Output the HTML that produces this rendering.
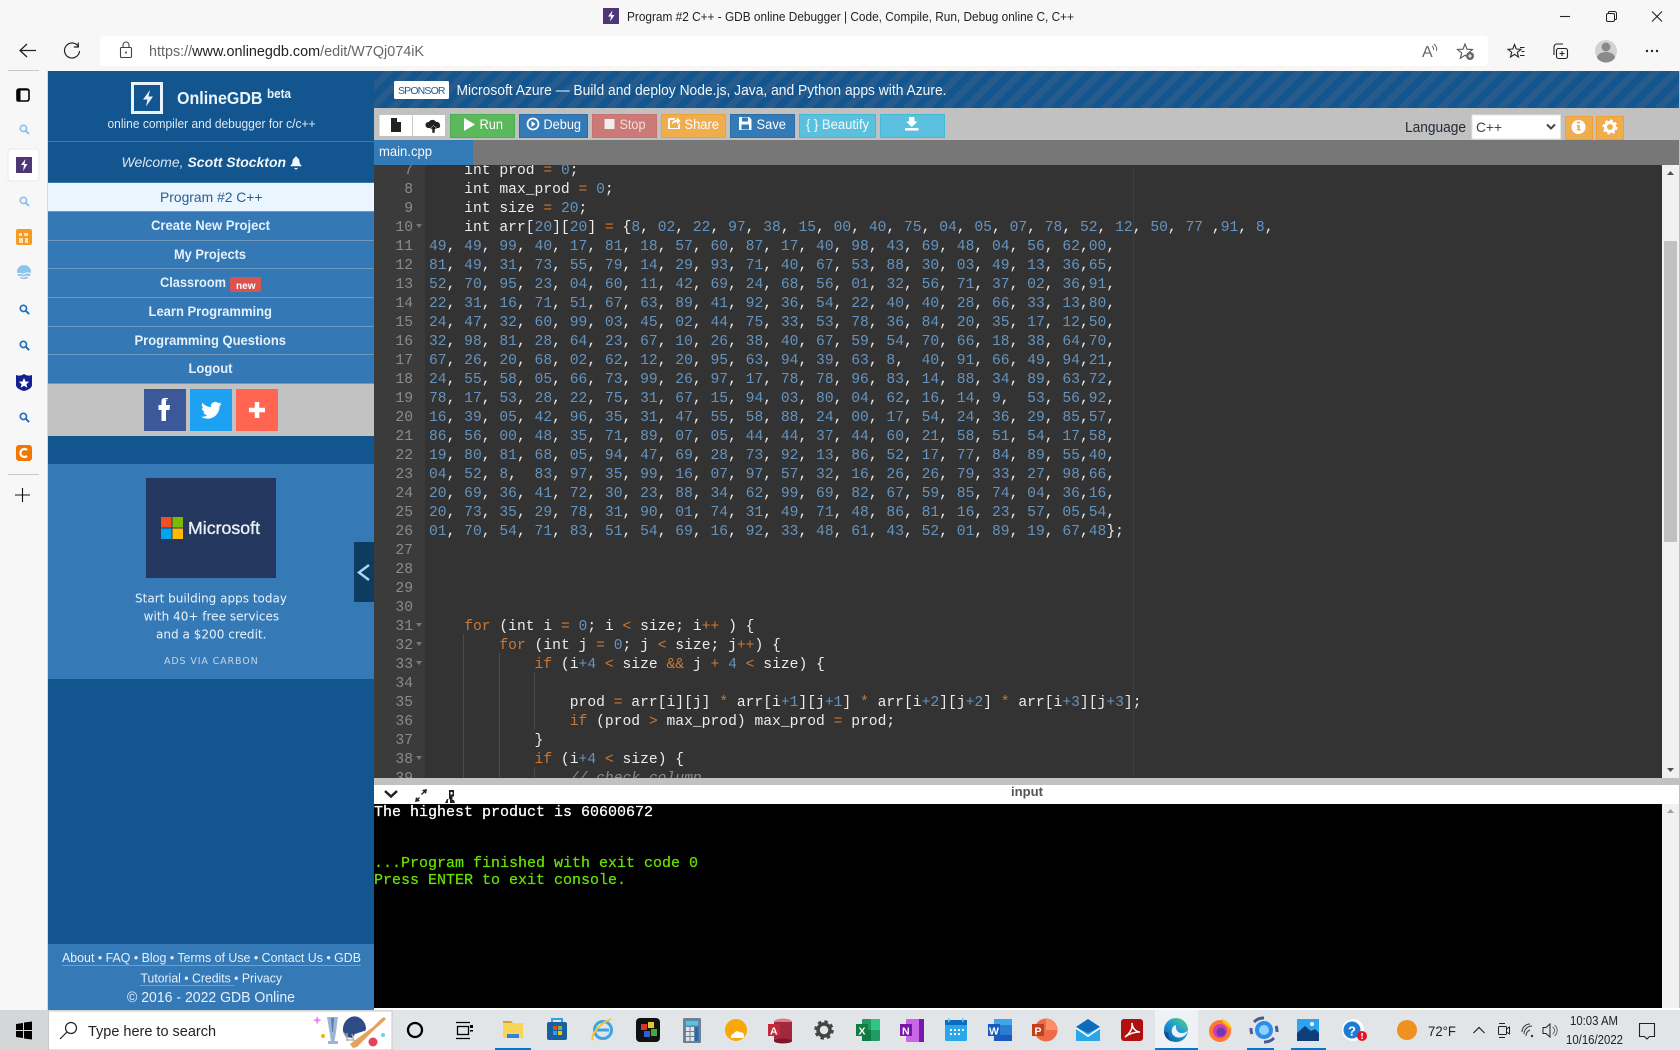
<!DOCTYPE html>
<html><head><meta charset="utf-8"><title>Program #2 C++ - GDB online Debugger</title>
<style>
html,body{margin:0;padding:0;width:1680px;height:1050px;overflow:hidden;background:#f7f7f7}
svg{position:absolute;left:0;top:0}
text{font-family:"Liberation Sans",sans-serif}
.box{position:absolute;overflow:hidden}
pre{position:absolute;margin:0;font-family:"Liberation Mono",monospace}
#code,#nums{font-size:14.667px;line-height:19px;top:-3.5px}
#code{left:4px;color:#ececec}
#nums{left:0;width:39px;text-align:right;color:#8b8b8b}
#code b{font-weight:normal;color:#6494c0}
#code s{text-decoration:none;color:#ececec}
#code i{font-style:normal;color:#cc7832}
#code em{font-style:italic;color:#8a8a8a}
#con{left:0;top:-.5px;font-size:15px;line-height:17px;color:#fff;font-weight:normal;-webkit-text-stroke:.25px currentColor}
#con span{color:#66e000}
.g{position:absolute;width:1px;background:#4a4a4a}
.f{position:absolute;left:42px;width:0;height:0;border-left:3px solid transparent;border-right:3px solid transparent;border-top:4px solid #777}
</style></head><body>
<svg width="1680" height="1050" viewBox="0 0 1680 1050" xmlns="http://www.w3.org/2000/svg">
<defs>
<pattern id="st" width="14" height="14" patternUnits="userSpaceOnUse" patternTransform="rotate(45)"><rect width="14" height="14" fill="#12558f"/><rect width="7" height="14" fill="#265b8b"/></pattern>
<symbol id="sr" viewBox="0 0 12 12"><circle cx="4.8" cy="4.8" r="3.4" fill="none" stroke="currentColor" stroke-width="1.8"/><path d="M7.3 7.3L11 11" stroke="currentColor" stroke-width="2.2"/></symbol>
<linearGradient id="eg" x1="0.1" y1="1" x2="0.9" y2="0"><stop offset="0" stop-color="#0a5ea8"/><stop offset=".55" stop-color="#1f9ad6"/><stop offset="1" stop-color="#58d37a"/></linearGradient>
</defs>
<rect width="1680" height="1050" fill="#f7f7f7"/>

<!-- title bar -->
<rect x="603" y="8" width="16" height="16" fill="#4f3677"/>
<path d="M612.5 10.5l-4.5 6h3l-1 5 4.500-6.500h-3z" fill="#fff"/>
<text x="627" y="21" font-size="12.500" fill="#222" textLength="447" lengthAdjust="spacingAndGlyphs">Program #2 C++ - GDB online Debugger | Code, Compile, Run, Debug online C, C++</text>
<path d="M1560 16.500h10" stroke="#222" stroke-width="1.100"/>
<g fill="none" stroke="#222" stroke-width="1"><rect x="1606.500" y="13.500" width="8" height="8" rx="1.500"/><path d="M1608.500 13.500v-1a1 1 0 011-1h5a2 2 0 012 2v5a1 1 0 01-1 1h-1"/></g>
<path d="M1652 11.500l10 10M1662 11.500l-10 10" stroke="#222" stroke-width="1.100"/>

<!-- toolbar -->
<path d="M20 50.500h16M27 44l-7 6.500 7 6.500" fill="none" stroke="#222" stroke-width="1.300"/>
<path d="M78 46a7.500 7.500 0 10 1.500 5M78.300 42.500v4.500h-4.500" fill="none" stroke="#222" stroke-width="1.200"/>
<rect x="100" y="36" width="1388" height="30" rx="4" fill="#fff"/>
<g fill="none" stroke="#444" stroke-width="1.100"><rect x="120.500" y="47.500" width="11" height="10" rx="1"/><path d="M123 47.500v-2.500a3 3 0 016 0v2.500"/></g><circle cx="126" cy="52.500" r="1" fill="#444"/>
<text x="149" y="56" font-size="14.500" fill="#666" textLength="275" lengthAdjust="spacingAndGlyphs">https://<tspan fill="#222">www.onlinegdb.com</tspan>/edit/W7Qj074iK</text>
<text x="1422" y="57" font-size="16" fill="#666">A</text>
<path d="M1434 44a7 7 0 012.500 7M1432 46a4 4 0 011.500 4" fill="none" stroke="#666"/>
<path d="M1465 44l2 5.200 5.500.3-4.200 3.500 1.400 5.300-4.700-3-4.700 3 1.400-5.300-4.200-3.500 5.500-.3z" fill="none" stroke="#555" stroke-width="1.100"/>
<circle cx="1470" cy="56" r="4" fill="#666"/><path d="M1468 56h4M1470 54v4" stroke="#fff"/>
<path d="M1514.500 44.500l1.700 4.500 4.800.3-3.700 3 1.200 4.700-4-2.600-4 2.600 1.200-4.700-3.700-3 4.800-.3z" fill="none" stroke="#222" stroke-width="1.100"/><path d="M1520 47.500h4.500M1521.500 51.500h3M1520 55.500h4.500" stroke="#222"/>
<g fill="none" stroke="#222" stroke-width="1.100"><rect x="1556.500" y="48.500" width="11" height="10" rx="2"/><path d="M1554 55v-8a3 3 0 013-3h6M1562 51v5M1559.500 53.500h5"/></g>
<circle cx="1606" cy="51" r="11" fill="#d2d2d2"/><circle cx="1606" cy="47" r="4.500" fill="#8a8a8a"/><path d="M1597 58a9 6 0 0118 0 11 11 0 01-18 0z" fill="#8a8a8a"/>
<g fill="#222"><circle cx="1647" cy="51" r="1.200"/><circle cx="1652" cy="51" r="1.200"/><circle cx="1657" cy="51" r="1.200"/></g>

<!-- left strip -->
<path d="M8 70.500h31" stroke="#c8c8c8"/>
<path d="M47.500 71v939" stroke="#d8d8d8"/>
<rect x="17" y="89" width="12" height="12" rx="2" fill="none" stroke="#000" stroke-width="1.600"/><path d="M17 90h12M17 91h3v10h-3z" stroke="#000" fill="#000" stroke-width="1"/>
<use href="#sr" x="19" y="124" width="11" height="11" color="#8ec0ea"/>
<rect x="8" y="149" width="31" height="32" rx="3" fill="#fff" stroke="#e8e8e8"/>
<rect x="16" y="157" width="16" height="16" fill="#4f3677"/><path d="M25.500 159l-4.500 6h3l-1 6 4.500-7h-3z" fill="#fff"/>
<use href="#sr" x="19" y="196" width="11" height="11" color="#8ec0ea"/>
<rect x="16" y="229" width="16" height="16" rx="2" fill="#f59a23"/><path d="M19 233h3v3h-3zM24 233h4v3h-4zM19 238h4v5h-4zM25 238h3v5h-3z" fill="#fde3ba"/>
<circle cx="24" cy="272" r="7" fill="#8cc4ec"/><path d="M17 274c3-2 5 1 7 0s5-2 7 0M18 277c3-2 5 1 6 0s4-1 6 0" stroke="#fff" fill="none"/>
<use href="#sr" x="19" y="304" width="11" height="11" color="#1f6fc0"/>
<use href="#sr" x="19" y="340" width="11" height="11" color="#1f6fc0"/>
<path d="M16 375c3 1 5 1 8-1 3 2 5 2 8 1v10c0 3-4 5-8 6-4-1-8-3-8-6z" fill="#14208f"/><path d="M24 378l1.600 3.500 3.600.3-2.800 2.400.9 3.500-3.300-2-3.300 2 .9-3.500-2.800-2.400 3.600-.3z" fill="#fff"/>
<use href="#sr" x="19" y="412" width="11" height="11" color="#1f6fc0"/>
<rect x="16" y="445" width="16" height="16" rx="3" fill="#f07800"/><path d="M27 450a4 4 0 100 6" stroke="#fff" stroke-width="2.200" fill="none"/>
<path d="M8 474.500h31" stroke="#c8c8c8"/>
<path d="M15 495h15M22.500 488v14" stroke="#111" stroke-width="1.100"/>

<!-- gdb sidebar -->
<rect x="48" y="71" width="326" height="939" fill="#12558f"/>
<rect x="48" y="141" width="326" height="1" fill="#3d78ac"/>
<rect x="132.500" y="83.500" width="29" height="29" fill="none" stroke="#eaf3fb" stroke-width="3"/>
<path d="M150 90l-7 9.500h4.500l-1.500 7 7-10h-4.500z" fill="#eaf3fb"/>
<text x="177" y="104" font-size="17.500" font-weight="bold" fill="#eaf4fd" textLength="85.500" lengthAdjust="spacingAndGlyphs">OnlineGDB</text>
<text x="267" y="98" font-size="12.500" font-weight="bold" fill="#eaf4fd" textLength="24" lengthAdjust="spacingAndGlyphs">beta</text>
<text x="107.500" y="128" font-size="12.500" fill="#dfe9f3" textLength="208" lengthAdjust="spacingAndGlyphs">online compiler and debugger for c/c++</text>
<text x="121.500" y="167" font-size="14" font-style="italic" fill="#d9e6f2" textLength="62" lengthAdjust="spacingAndGlyphs">Welcome,</text>
<text x="187.500" y="167" font-size="14" font-style="italic" font-weight="bold" fill="#f0f7fd" textLength="98.500" lengthAdjust="spacingAndGlyphs">Scott Stockton</text>
<path d="M296 156.500a1 1 0 011 1.200 3.500 4 0 012.500 3.800c0 2.500 1.500 3.500 2 4v.8h-11v-.8c.5-.5 2-1.500 2-4a3.500 4 0 012.500-3.800 1 1 0 011-1.200zM294.500 168h3a1.500 1.500 0 01-3 0z" fill="#f0f7fd"/>
<rect x="48" y="182" width="326" height="1" fill="#3d78ac"/>
<rect x="48" y="183" width="326" height="28" fill="#ebf5ff"/>
<text x="160" y="202" font-size="14" fill="#2a5f90" textLength="102.500" lengthAdjust="spacingAndGlyphs">Program #2 C++</text>
<rect x="48" y="211" width="326" height="173" fill="#3479b5"/>
<g fill="#6e97bb"><rect x="48" y="211" width="326" height="1"/><rect x="48" y="240" width="326" height="1"/><rect x="48" y="268" width="326" height="1"/><rect x="48" y="297" width="326" height="1"/><rect x="48" y="326" width="326" height="1"/><rect x="48" y="354" width="326" height="1"/><rect x="48" y="383" width="326" height="1"/></g>
<g font-size="13.500" font-weight="bold" fill="#e4f1fc">
<text x="151" y="230" textLength="119" lengthAdjust="spacingAndGlyphs">Create New Project</text>
<text x="174" y="259" textLength="72" lengthAdjust="spacingAndGlyphs">My Projects</text>
<text x="160" y="287" textLength="66" lengthAdjust="spacingAndGlyphs">Classroom</text>
<text x="148.500" y="316" textLength="123.500" lengthAdjust="spacingAndGlyphs">Learn Programming</text>
<text x="134.500" y="345" textLength="151.500" lengthAdjust="spacingAndGlyphs">Programming Questions</text>
<text x="188.500" y="373" textLength="44" lengthAdjust="spacingAndGlyphs">Logout</text>
</g>
<rect x="230" y="277" width="31" height="15" rx="2" fill="#d9534f"/>
<text x="236" y="289" font-size="10.500" font-weight="bold" fill="#fff" textLength="19.500" lengthAdjust="spacingAndGlyphs">new</text>
<rect x="48" y="384" width="326" height="52" fill="#c2c2c2"/>
<rect x="144" y="389" width="42" height="42" fill="#3b5998"/>
<path d="M168 400h3.500v-1h-3c-3 0-3.500 1.500-3.500 4v3h-3v5h3v11h4.500v-11h3.500l.5-5h-4v-3c0-1.500.5-2 1.500-2z" fill="#fff" transform="translate(-3.500 -1)"/>
<rect x="190" y="389" width="42" height="42" fill="#1da1f2"/>
<g transform="translate(201 400) scale(.86)"><path fill="#fff" d="M23.953 4.57a10 10 0 01-2.825.775 4.958 4.958 0 002.163-2.723c-.951.555-2.005.959-3.127 1.184a4.92 4.92 0 00-8.384 4.482C7.69 8.095 4.067 6.13 1.64 3.162a4.822 4.822 0 00-.666 2.475c0 1.71.87 3.213 2.188 4.096a4.904 4.904 0 01-2.228-.616v.06a4.923 4.923 0 003.946 4.827 4.996 4.996 0 01-2.212.085 4.936 4.936 0 004.604 3.417 9.867 9.867 0 01-6.102 2.105c-.39 0-.779-.023-1.17-.067a13.995 13.995 0 007.557 2.209c9.053 0 13.998-7.496 13.998-13.985 0-.21 0-.42-.015-.63A9.935 9.935 0 0024 4.59z"/></g>
<rect x="236" y="389" width="42" height="42" fill="#ff6550"/>
<path d="M257 402v16M249 410h16" stroke="#fff" stroke-width="4.500"/>
<rect x="48" y="464" width="326" height="215" fill="#3579b6"/>
<rect x="146" y="478" width="130" height="100" fill="#24375f"/>
<rect x="161" y="517" width="10.500" height="10.500" fill="#f25022"/><rect x="172.500" y="517" width="10.500" height="10.500" fill="#7fba00"/><rect x="161" y="528.500" width="10.500" height="10.500" fill="#00a4ef"/><rect x="172.500" y="528.500" width="10.500" height="10.500" fill="#ffb900"/>
<text x="188" y="534" font-size="17.500" fill="#eef0f4" stroke="#eef0f4" stroke-width=".35" textLength="72" lengthAdjust="spacingAndGlyphs">Microsoft</text>
<g fill="#e8f3fc" font-size="12">
<text style="font-family:'DejaVu Sans',sans-serif" x="135" y="602.500" textLength="152" lengthAdjust="spacingAndGlyphs">Start building apps today</text>
<text style="font-family:'DejaVu Sans',sans-serif" x="143.700" y="620.500" textLength="135.500" lengthAdjust="spacingAndGlyphs">with 40+ free services</text>
<text style="font-family:'DejaVu Sans',sans-serif" x="156" y="638.500" textLength="110.500" lengthAdjust="spacingAndGlyphs">and a $200 credit.</text>
</g>
<text style="font-family:'DejaVu Sans',sans-serif" x="164" y="664" font-size="9.500" fill="#c4d6e6" textLength="93.700" lengthAdjust="spacing">ADS VIA CARBON</text>
<rect x="354" y="542" width="20" height="60" fill="#0e3b60"/>
<path d="M369 565l-10 7.500 10 7.500" fill="none" stroke="#a9d3f7" stroke-width="2.500"/>
<rect x="48" y="944" width="326" height="66" fill="#3579b6"/>
<g font-size="13" fill="#e4f1fc">
<text x="62" y="962" textLength="299" lengthAdjust="spacingAndGlyphs">About • FAQ • Blog • Terms of Use • Contact Us • GDB</text>
<text x="140.500" y="982.500" textLength="141.500" lengthAdjust="spacingAndGlyphs">Tutorial • Credits • Privacy</text>
<text x="127" y="1002" font-size="14.500" textLength="168" lengthAdjust="spacingAndGlyphs">© 2016 - 2022 GDB Online</text>
</g>
<path d="M62 965.500h299M140 985.500h94" stroke="#6f9fca"/>

<!-- main right -->
<rect x="374" y="71" width="1306" height="37" fill="url(#st)"/>
<rect x="394" y="81" width="55" height="18" rx="1.500" fill="#fff"/>
<text x="398" y="94" font-size="10.500" fill="#1f5a8c" textLength="47.500" lengthAdjust="spacing">SPONSOR</text>
<text x="456.500" y="95" font-size="15" fill="#f0f6fc" textLength="490" lengthAdjust="spacingAndGlyphs">Microsoft Azure — Build and deploy Node.js, Java, and Python apps with Azure.</text>
<rect x="374" y="108" width="1306" height="32" fill="#c1c1c1"/>
<rect x="374" y="140" width="1306" height="25" fill="#777"/>
<rect x="374" y="140" width="99" height="25" fill="#337ab7"/>
<text x="379" y="156" font-size="13.500" fill="#f2f8fd" textLength="53" lengthAdjust="spacingAndGlyphs">main.cpp</text>

<!-- toolbar buttons -->
<rect x="379.500" y="115" width="65.500" height="21" fill="#fff"/><path d="M412.500 115v21" stroke="#ccc"/>
<path d="M391 118h6l4 4v10h-10zM397 118v4h4" fill="#222"/><path d="M397.500 118.500v3.500h3.500" fill="#fff"/>
<path d="M429 122a4 4 0 017 0 3.500 3.500 0 013 6h-4v3h-3v-3h-4a3 3 0 011-6z" fill="#222"/><path d="M429.500 129l4-3.500 4 3.500h-2.500v4h-3v-4z" fill="#222" stroke="#fff" stroke-width=".5"/>
<g stroke-width="1">
<rect x="450.500" y="114.500" width="64" height="23" fill="#5cb85c" stroke="#4cae4c"/>
<rect x="519.500" y="114.500" width="68" height="23" fill="#337ab7" stroke="#2e6da4"/>
<rect x="592.500" y="114.500" width="64" height="23" fill="#cc7a77" stroke="#c97370"/>
<rect x="661.500" y="114.500" width="64" height="23" fill="#f0ad4e" stroke="#eea236"/>
<rect x="730.500" y="114.500" width="64" height="23" fill="#337ab7" stroke="#2e6da4"/>
<rect x="799.500" y="114.500" width="76" height="23" fill="#5bc0de" stroke="#46b8da"/>
<rect x="880.500" y="114.500" width="64" height="23" fill="#5bc0de" stroke="#46b8da"/>
</g>
<g font-size="13.500" fill="#fff">
<path d="M464 118l11 6.500-11 6.500z"/>
<text x="479.500" y="129" textLength="23.500" lengthAdjust="spacingAndGlyphs">Run</text>
<circle cx="533" cy="124" r="5.500" fill="none" stroke="#fff" stroke-width="1.800"/><path d="M531.500 121l4 3-4 3z"/>
<text x="543.500" y="129" textLength="37.500" lengthAdjust="spacingAndGlyphs">Debug</text>
<rect x="604.500" y="119" width="10" height="10" fill="#eee"/>
<text x="619.500" y="129" fill="#f0dcdb" textLength="26" lengthAdjust="spacingAndGlyphs">Stop</text>
<path d="M668 120a2 2 0 012-2h6l-2 2h-4v8h8v-3l2-2v6h-12z"/><path d="M680.500 121l-3.500-3.500v2.200c-3 0-5 1.500-5 5 1.500-2 3-2.500 5-2.500v2.300z"/>
<text x="684.500" y="129" textLength="34.500" lengthAdjust="spacingAndGlyphs">Share</text>
<path d="M739 117h10l2.500 2.500v10.500h-12.500z"/><rect x="742" y="117.500" width="6" height="4" fill="#337ab7"/><rect x="741.500" y="124.500" width="7.500" height="5" fill="#337ab7"/>
<text x="756.500" y="129" textLength="29.500" lengthAdjust="spacingAndGlyphs">Save</text>
<text x="806" y="129" fill="#f4fbfe" textLength="63" lengthAdjust="spacingAndGlyphs">{ } Beautify</text>
<path d="M909 117h5.500v4.500h3l-5.800 5.500-5.700-5.500h3z"/><rect x="905" y="128" width="13.500" height="2.500"/>
</g>
<text x="1405" y="132" font-size="14.500" fill="#1f2a38" textLength="61" lengthAdjust="spacingAndGlyphs">Language</text>
<rect x="1472" y="115" width="88.500" height="24" fill="#fff" stroke="#e4e4e4"/>
<text x="1476" y="132" font-size="14" fill="#444" textLength="26" lengthAdjust="spacingAndGlyphs">C++</text>
<path d="M1547 124.500l4 4 4-4" fill="none" stroke="#444" stroke-width="2"/>
<rect x="1565.500" y="116.500" width="27" height="23" fill="#f0ad4e" stroke="#eea236"/>
<circle cx="1578.500" cy="127" r="7" fill="#fff"/><path d="M1577 123.500h2.800v-1.900h-2.800zM1576.800 125h3v4.200h1v1.300h-4v-1.300h1z" fill="#f0ad4e"/>
<rect x="1596.500" y="116.500" width="27" height="23" fill="#f0ad4e" stroke="#eea236"/>
<circle cx="1610" cy="127" r="4.500" fill="none" stroke="#fff" stroke-width="3"/><circle cx="1610" cy="127" r="6.500" fill="none" stroke="#fff" stroke-width="2" stroke-dasharray="2.500 2.600"/>

<!-- editor frame -->
<rect x="374" y="165" width="51" height="613" fill="#3b3b3b"/>
<rect x="425" y="165" width="1237" height="613" fill="#333"/>
<rect x="1662" y="165" width="17" height="613" fill="#f1f1f1"/>
<rect x="1664" y="241" width="13" height="301" fill="#c1c1c1"/>
<path d="M1667 175l3.500-4 3.500 4z" fill="#505050"/><path d="M1667 768l3.500 4 3.500-4z" fill="#505050"/>
<rect x="1679" y="71" width="1" height="937" fill="#c0c0c0"/>
<rect x="374" y="778" width="1306" height="7" fill="#c1c1c1"/>
<rect x="374" y="785" width="1305" height="19" fill="#fff"/>
<path d="M385 791l6 5.500 6-5.500" fill="none" stroke="#222" stroke-width="2.500"/>
<path d="M427 789l-5 1 4 4zM415 802l1-5 4 4z" fill="#222"/><path d="M424.500 791.500l-3 3M416.500 800.500l3-3" stroke="#222" stroke-width="1.300"/>
<path d="M449 790h5v6.500h-1.500v3.500h1.500l1 3h-5v-4l-2 .5v3.500h-3l2-4h2v-3h0zM450.500 792v2.500h2V792z" fill="#222" fill-rule="evenodd"/>
<text x="1011" y="796" font-size="12.500" font-weight="bold" fill="#555" textLength="32" lengthAdjust="spacingAndGlyphs">input</text>
<rect x="374" y="804" width="1288" height="204" fill="#000"/>
<rect x="1662" y="804" width="17" height="204" fill="#f1f1f1"/>
<path d="M1667 813l3.500-4 3.500 4z" fill="#a0a0a0"/>
<rect x="374" y="1008" width="1306" height="2" fill="#fff"/>

<!-- taskbar -->
<rect y="1010" width="1680" height="40" fill="#e2e5e7"/>
<rect y="1010" width="48" height="40" fill="#d5d6d7"/>
<g fill="#000"><path d="M16 1024l7-1v7h-7zM24 1022.500l8-1v8.500h-8zM16 1031h7v7l-7-1zM24 1031h8v8.500l-8-1z"/></g>
<rect x="48.500" y="1011" width="343.500" height="39" fill="#fff" stroke="#c8c8c8"/>
<g fill="none" stroke="#222" stroke-width="1.200"><circle cx="71" cy="1028" r="5.500"/><path d="M67 1032l-7 7"/></g>
<text x="88" y="1036" font-size="15" fill="#222" textLength="128" lengthAdjust="spacingAndGlyphs">Type here to search</text>
<path d="M317 1016l1.500 3 3 1-3 1.500-1.500 3-1-3-3-1.500 3-1z" fill="#e58af0"/>
<path d="M327 1017h11l-2 15-1.500 9h3.500v3h-10v-3h3l-1.500-9z" fill="#9fb4d8"/><path d="M331 1018h3l-1 14h-1z" fill="#5f7ba8"/>
<circle cx="323" cy="1036" r="2" fill="#f4b400"/>
<path d="M343 1031a11.500 13 0 0123-3c0 2-1 3-2 3l-9 3-3 4-5-1a12 12 0 01-4-6z" fill="#2f4c86"/>
<path d="M344 1033l4 7 6 0M347 1033v8M352 1034l2 7" stroke="#aaa" fill="none" stroke-width="1.300"/>
<path d="M350 1044l3 4 4-1 17-17 9-8 3-3-2-2-3 2-8 8z" fill="#e6a15c"/>
<circle cx="373" cy="1042" r="4.500" fill="#e2445c"/><circle cx="383" cy="1035" r="2" fill="#6ad3e8"/>
<circle cx="415" cy="1030" r="7" fill="none" stroke="#000" stroke-width="2.300"/>
<g fill="none" stroke="#000" stroke-width="1.300"><rect x="457.500" y="1026.500" width="11" height="8"/><path d="M456 1022.500h14M456 1038.500h14"/></g><rect x="470" y="1025" width="3" height="3" fill="#000"/><rect x="470" y="1030" width="3" height="1.500" fill="#000"/>
<rect x="503" y="1023" width="20" height="15" fill="#f8d458"/><path d="M503 1023v-2h8l2 2z" fill="#d9a02c"/><rect x="507" y="1034" width="12" height="4" fill="#2b88d8"/>
<rect x="495" y="1048" width="36" height="2" fill="#0078d4"/>
<rect x="547" y="1022" width="20" height="18" rx="2" fill="#1a5e9e"/><path d="M552 1022v-3h10v3" fill="none" stroke="#27a6e0" stroke-width="2"/><rect x="553" y="1026" width="4" height="4" fill="#e64a19"/><rect x="558" y="1026" width="4" height="4" fill="#7cb342"/><rect x="553" y="1031" width="4" height="4" fill="#29a3ea"/><rect x="558" y="1031" width="4" height="4" fill="#ffc107"/>
<rect x="1155" y="1010" width="43" height="40" fill="#eff2f4"/>
<g fill="none" stroke-width="3"><circle cx="603" cy="1030" r="8.500" stroke="#3fa4e6"/><path d="M594 1030h15" stroke="#3fa4e6"/><path d="M593 1040c-3-3 5-16 18-21" stroke="#f3c432" stroke-width="2"/></g>
<rect x="636" y="1018" width="24" height="24" rx="4" fill="#111"/><g><rect x="641" y="1024" width="6" height="6" fill="#d6332c"/><rect x="648" y="1022" width="6" height="6" fill="#e8c820"/><rect x="644" y="1031" width="6" height="6" fill="#2c62d0"/><rect x="651" y="1029" width="6" height="7" fill="#46a63c"/></g>
<rect x="683" y="1018" width="18" height="25" rx="1" fill="#6c8296"/><rect x="686" y="1021" width="12" height="4.500" fill="#4cc6ef"/><g fill="#dfe5ea"><rect x="686" y="1027" width="3.500" height="4"/><rect x="690.500" y="1027" width="3.500" height="4"/><rect x="686" y="1032" width="3.500" height="4"/><rect x="690.500" y="1032" width="3.500" height="4"/><rect x="686" y="1037" width="3.500" height="4"/><rect x="690.500" y="1037" width="3.500" height="4"/></g><rect x="695" y="1027" width="3.500" height="14" fill="#1a6fb5"/>
<circle cx="736" cy="1030" r="11" fill="#f5a808"/><path d="M731 1038a3.500 3.500 0 013-4.500 3.500 3.500 0 016-1 3 3 0 014 2.500 2.500 2.500 0 01-1 3z" fill="#fff"/>
<ellipse cx="783" cy="1022" rx="9" ry="3.500" fill="#e0798a"/><rect x="774" y="1022" width="18" height="19" fill="#a4283c"/><ellipse cx="783" cy="1041" rx="9" ry="2.500" fill="#7c1628"/><rect x="768" y="1024" width="12" height="12" fill="#c02a3c"/><text x="770" y="1034.500" font-size="10.500" font-weight="bold" fill="#fff">A</text>
<circle cx="824" cy="1030" r="6" fill="none" stroke="#444" stroke-width="3.500"/><circle cx="824" cy="1030" r="8.500" fill="none" stroke="#444" stroke-width="2.500" stroke-dasharray="3.400 3.300"/>
<rect x="862" y="1019" width="18" height="22" rx="1" fill="#1d9d63"/><rect x="871" y="1019" width="9" height="11" fill="#33c481"/><rect x="862" y="1030" width="9" height="11" fill="#107c41"/><rect x="856" y="1024" width="12" height="12" fill="#107c41"/><text x="858.500" y="1034.500" font-size="10.500" font-weight="bold" fill="#fff">X</text>
<rect x="906" y="1019" width="18" height="23" rx="1" fill="#ca64ea"/><rect x="919" y="1019" width="5" height="23" fill="#7719aa"/><rect x="900" y="1024" width="12" height="12" fill="#7719aa"/><text x="902" y="1034.500" font-size="10.500" font-weight="bold" fill="#fff">N</text>
<rect x="945" y="1020" width="22" height="21" rx="1.500" fill="#28a8ea"/><rect x="945" y="1020" width="22" height="5" fill="#0f6cbd"/><rect x="948" y="1018" width="1.500" height="4" fill="#79c8f0"/><rect x="962" y="1018" width="1.500" height="4" fill="#79c8f0"/><g fill="#fff"><rect x="950" y="1029" width="2" height="2"/><rect x="954" y="1029" width="2" height="2"/><rect x="958" y="1029" width="2" height="2"/><rect x="962" y="1029" width="2" height="2"/><rect x="950" y="1033" width="2" height="2"/><rect x="954" y="1033" width="2" height="2"/><rect x="958" y="1033" width="2" height="2"/></g>
<rect x="994" y="1019" width="18" height="22" rx="1" fill="#2b7cd3"/><rect x="994" y="1019" width="18" height="6" fill="#41a5ee"/><rect x="994" y="1035" width="18" height="6" fill="#185abd"/><rect x="988" y="1024" width="12" height="12" fill="#185abd"/><text x="989" y="1034.500" font-size="10.500" font-weight="bold" fill="#fff">W</text>
<circle cx="1046" cy="1030" r="11.500" fill="#ed6c47"/><path d="M1046 1019a11 11 0 0111 11h-11z" fill="#ff8f6b"/><rect x="1032" y="1024" width="12" height="12" fill="#c43e1c"/><text x="1034.500" y="1034.500" font-size="10.500" font-weight="bold" fill="#fff">P</text>
<path d="M1076 1027l12-8 12 8v14h-24z" fill="#28a8ea"/><path d="M1076 1027l12-8 12 8-12 6z" fill="#0f6cbd"/><path d="M1076 1027l12 8 12-8v2l-12 8-12-8z" fill="#fff"/>
<rect x="1121" y="1019" width="22" height="22" rx="3" fill="#b01010"/><path d="M1125 1037c4-3 8-8 7-14 0 5 4 9 8 9-4 0-10 1-15 5z" fill="none" stroke="#fff" stroke-width="1.600"/>
<circle cx="1176" cy="1030" r="12" fill="url(#eg)"/>
<path d="M1176 1025c-3.500 1-5 4.500-4 8 1 3 4.500 5 8 4.500 3.500-.5 6-2.500 7.500-5.500l.5-1.500c-1.500 1.800-4.500 3-7.500 2.500-3.500-.5-5-4.500-4.500-8z" fill="#eff2f4"/>
<path d="M1164 1031c0 5 3 9 8 10.500-2.500-2-4-5-3.500-8.500z" fill="#0c4f92"/>
<rect x="1155" y="1048" width="43" height="2" fill="#0078d4"/>
<circle cx="1220" cy="1031" r="11" fill="#ff7a2f"/><circle cx="1220" cy="1031" r="7" fill="#ce3bb4"/><circle cx="1221" cy="1032" r="4.500" fill="#6a3bb5"/><path d="M1222 1019c5 1 10 6 10 11l-6-5c-2-2-4-3-4-6z" fill="#ffc61f"/>
<circle cx="1264" cy="1030" r="9" fill="#2c8fe6"/><circle cx="1264" cy="1030" r="5" fill="#8fd0ff"/><path d="M1254 1022a13 13 0 0110-4M1274 1038a13 13 0 01-10 4M1252 1034a13 13 0 01-1-6M1276 1026a13 13 0 011 6" stroke="#4a5a90" stroke-width="3" fill="none"/>
<rect x="1247" y="1048" width="27" height="2" fill="#0078d4"/>
<rect x="1297" y="1019" width="22" height="22" fill="#2ca5ee"/><path d="M1297 1041v-8l8-7 6 5 4-2 4 4v8z" fill="#0f3f7a"/><circle cx="1312" cy="1024" r="2" fill="#fff"/>
<rect x="1291" y="1048" width="35" height="2" fill="#0078d4"/>
<circle cx="1353" cy="1030" r="11" fill="#fff"/><circle cx="1352" cy="1030" r="8.500" fill="#1c7cd6"/><text x="1348" y="1035.500" font-size="13" font-weight="bold" fill="#fff">?</text><circle cx="1362" cy="1036" r="5" fill="#e81123"/><rect x="1361.300" y="1033" width="1.500" height="3.500" fill="#fff"/><rect x="1361.300" y="1037.500" width="1.500" height="1.500" fill="#fff"/>
<circle cx="1407" cy="1030" r="10" fill="#f09020"/>
<text x="1428" y="1036" font-size="14" fill="#222" textLength="28" lengthAdjust="spacingAndGlyphs">72°F</text>
<path d="M1473.500 1033l5.500-5.500 5.500 5.500" fill="none" stroke="#222" stroke-width="1.200"/>
<g fill="none" stroke="#222" stroke-width="1"><rect x="1498.500" y="1026.500" width="8" height="8" rx="1"/><path d="M1506.500 1029l3-2v7l-3-2M1499 1023.500h6M1499 1037.500h6"/></g>
<g fill="none" stroke="#333" stroke-width="1"><path d="M1522 1032a8 8 0 018-8M1524 1034a8 8 0 018-8M1526 1036a6 6 0 014-6"/></g><circle cx="1532" cy="1036" r="1.200" fill="#333"/>
<path d="M1543 1027.500h3l4-3.500v13l-4-3.500h-3z" fill="none" stroke="#222"/><path d="M1552.500 1027a4 4 0 010 7M1554.500 1025a7 7 0 010 11" fill="none" stroke="#666"/>
<text x="1570" y="1025" font-size="12.500" fill="#222" textLength="48" lengthAdjust="spacingAndGlyphs">10:03 AM</text>
<text x="1566" y="1044" font-size="12.500" fill="#222" textLength="57" lengthAdjust="spacingAndGlyphs">10/16/2022</text>
<path d="M1639.500 1023.500h15v13h-5l-2.500 2.500-2.500-2.500h-5z" fill="none" stroke="#222" stroke-width="1.100"/>
</svg>

<!-- gutter + code -->
<div class="box" style="left:374px;top:165px;width:51px;height:613px">
<pre id="nums">7
8
9
10
11
12
13
14
15
16
17
18
19
20
21
22
23
24
25
26
27
28
29
30
31
32
33
34
35
36
37
38
39</pre>
<div class="f" style="top:59px"></div><div class="f" style="top:458px"></div><div class="f" style="top:477px"></div><div class="f" style="top:496px"></div><div class="f" style="top:591px"></div>
</div>
<div class="box" style="left:425px;top:165px;width:1237px;height:613px">
<div class="g" style="left:708px;top:0;height:613px;background:#3e3e3e"></div>
<div class="g" style="left:38px;top:469px;height:144px"></div>
<div class="g" style="left:74px;top:488px;height:125px"></div>
<div class="g" style="left:109px;top:507px;height:57px"></div>
<div class="g" style="left:109px;top:602px;height:11px"></div>
<pre id="code">    int prod <i>=</i> <b>0</b>;
    int max_prod <i>=</i> <b>0</b>;
    int size <i>=</i> <b>20</b>;
    int arr[<b>20</b>][<b>20</b>] <i>=</i> {<b>8<s>,</s> 02<s>,</s> 22<s>,</s> 97<s>,</s> 38<s>,</s> 15<s>,</s> 00<s>,</s> 40<s>,</s> 75<s>,</s> 04<s>,</s> 05<s>,</s> 07<s>,</s> 78<s>,</s> 52<s>,</s> 12<s>,</s> 50<s>,</s> 77 <s>,</s>91<s>,</s> 8<s>,</s></b>
<b>49<s>,</s> 49<s>,</s> 99<s>,</s> 40<s>,</s> 17<s>,</s> 81<s>,</s> 18<s>,</s> 57<s>,</s> 60<s>,</s> 87<s>,</s> 17<s>,</s> 40<s>,</s> 98<s>,</s> 43<s>,</s> 69<s>,</s> 48<s>,</s> 04<s>,</s> 56<s>,</s> 62<s>,</s>00<s>,</s></b>
<b>81<s>,</s> 49<s>,</s> 31<s>,</s> 73<s>,</s> 55<s>,</s> 79<s>,</s> 14<s>,</s> 29<s>,</s> 93<s>,</s> 71<s>,</s> 40<s>,</s> 67<s>,</s> 53<s>,</s> 88<s>,</s> 30<s>,</s> 03<s>,</s> 49<s>,</s> 13<s>,</s> 36<s>,</s>65<s>,</s></b>
<b>52<s>,</s> 70<s>,</s> 95<s>,</s> 23<s>,</s> 04<s>,</s> 60<s>,</s> 11<s>,</s> 42<s>,</s> 69<s>,</s> 24<s>,</s> 68<s>,</s> 56<s>,</s> 01<s>,</s> 32<s>,</s> 56<s>,</s> 71<s>,</s> 37<s>,</s> 02<s>,</s> 36<s>,</s>91<s>,</s></b>
<b>22<s>,</s> 31<s>,</s> 16<s>,</s> 71<s>,</s> 51<s>,</s> 67<s>,</s> 63<s>,</s> 89<s>,</s> 41<s>,</s> 92<s>,</s> 36<s>,</s> 54<s>,</s> 22<s>,</s> 40<s>,</s> 40<s>,</s> 28<s>,</s> 66<s>,</s> 33<s>,</s> 13<s>,</s>80<s>,</s></b>
<b>24<s>,</s> 47<s>,</s> 32<s>,</s> 60<s>,</s> 99<s>,</s> 03<s>,</s> 45<s>,</s> 02<s>,</s> 44<s>,</s> 75<s>,</s> 33<s>,</s> 53<s>,</s> 78<s>,</s> 36<s>,</s> 84<s>,</s> 20<s>,</s> 35<s>,</s> 17<s>,</s> 12<s>,</s>50<s>,</s></b>
<b>32<s>,</s> 98<s>,</s> 81<s>,</s> 28<s>,</s> 64<s>,</s> 23<s>,</s> 67<s>,</s> 10<s>,</s> 26<s>,</s> 38<s>,</s> 40<s>,</s> 67<s>,</s> 59<s>,</s> 54<s>,</s> 70<s>,</s> 66<s>,</s> 18<s>,</s> 38<s>,</s> 64<s>,</s>70<s>,</s></b>
<b>67<s>,</s> 26<s>,</s> 20<s>,</s> 68<s>,</s> 02<s>,</s> 62<s>,</s> 12<s>,</s> 20<s>,</s> 95<s>,</s> 63<s>,</s> 94<s>,</s> 39<s>,</s> 63<s>,</s> 8<s>,</s>  40<s>,</s> 91<s>,</s> 66<s>,</s> 49<s>,</s> 94<s>,</s>21<s>,</s></b>
<b>24<s>,</s> 55<s>,</s> 58<s>,</s> 05<s>,</s> 66<s>,</s> 73<s>,</s> 99<s>,</s> 26<s>,</s> 97<s>,</s> 17<s>,</s> 78<s>,</s> 78<s>,</s> 96<s>,</s> 83<s>,</s> 14<s>,</s> 88<s>,</s> 34<s>,</s> 89<s>,</s> 63<s>,</s>72<s>,</s></b>
<b>78<s>,</s> 17<s>,</s> 53<s>,</s> 28<s>,</s> 22<s>,</s> 75<s>,</s> 31<s>,</s> 67<s>,</s> 15<s>,</s> 94<s>,</s> 03<s>,</s> 80<s>,</s> 04<s>,</s> 62<s>,</s> 16<s>,</s> 14<s>,</s> 9<s>,</s>  53<s>,</s> 56<s>,</s>92<s>,</s></b>
<b>16<s>,</s> 39<s>,</s> 05<s>,</s> 42<s>,</s> 96<s>,</s> 35<s>,</s> 31<s>,</s> 47<s>,</s> 55<s>,</s> 58<s>,</s> 88<s>,</s> 24<s>,</s> 00<s>,</s> 17<s>,</s> 54<s>,</s> 24<s>,</s> 36<s>,</s> 29<s>,</s> 85<s>,</s>57<s>,</s></b>
<b>86<s>,</s> 56<s>,</s> 00<s>,</s> 48<s>,</s> 35<s>,</s> 71<s>,</s> 89<s>,</s> 07<s>,</s> 05<s>,</s> 44<s>,</s> 44<s>,</s> 37<s>,</s> 44<s>,</s> 60<s>,</s> 21<s>,</s> 58<s>,</s> 51<s>,</s> 54<s>,</s> 17<s>,</s>58<s>,</s></b>
<b>19<s>,</s> 80<s>,</s> 81<s>,</s> 68<s>,</s> 05<s>,</s> 94<s>,</s> 47<s>,</s> 69<s>,</s> 28<s>,</s> 73<s>,</s> 92<s>,</s> 13<s>,</s> 86<s>,</s> 52<s>,</s> 17<s>,</s> 77<s>,</s> 84<s>,</s> 89<s>,</s> 55<s>,</s>40<s>,</s></b>
<b>04<s>,</s> 52<s>,</s> 8<s>,</s>  83<s>,</s> 97<s>,</s> 35<s>,</s> 99<s>,</s> 16<s>,</s> 07<s>,</s> 97<s>,</s> 57<s>,</s> 32<s>,</s> 16<s>,</s> 26<s>,</s> 26<s>,</s> 79<s>,</s> 33<s>,</s> 27<s>,</s> 98<s>,</s>66<s>,</s></b>
<b>20<s>,</s> 69<s>,</s> 36<s>,</s> 41<s>,</s> 72<s>,</s> 30<s>,</s> 23<s>,</s> 88<s>,</s> 34<s>,</s> 62<s>,</s> 99<s>,</s> 69<s>,</s> 82<s>,</s> 67<s>,</s> 59<s>,</s> 85<s>,</s> 74<s>,</s> 04<s>,</s> 36<s>,</s>16<s>,</s></b>
<b>20<s>,</s> 73<s>,</s> 35<s>,</s> 29<s>,</s> 78<s>,</s> 31<s>,</s> 90<s>,</s> 01<s>,</s> 74<s>,</s> 31<s>,</s> 49<s>,</s> 71<s>,</s> 48<s>,</s> 86<s>,</s> 81<s>,</s> 16<s>,</s> 23<s>,</s> 57<s>,</s> 05<s>,</s>54<s>,</s></b>
<b>01<s>,</s> 70<s>,</s> 54<s>,</s> 71<s>,</s> 83<s>,</s> 51<s>,</s> 54<s>,</s> 69<s>,</s> 16<s>,</s> 92<s>,</s> 33<s>,</s> 48<s>,</s> 61<s>,</s> 43<s>,</s> 52<s>,</s> 01<s>,</s> 89<s>,</s> 19<s>,</s> 67<s>,</s>48</b>};




    <i>for</i> (int i <i>=</i> <b>0</b>; i <i>&lt;</i> size; i<i>++</i> ) {
        <i>for</i> (int j <i>=</i> <b>0</b>; j <i>&lt;</i> size; j<i>++</i>) {
            <i>if</i> (i<b>+4</b> <i>&lt;</i> size <i>&amp;&amp;</i> j <i>+</i> <b>4</b> <i>&lt;</i> size) {
                
                prod <i>=</i> arr[i][j] <i>*</i> arr[i<b>+1</b>][j<b>+1</b>] <i>*</i> arr[i<b>+2</b>][j<b>+2</b>] <i>*</i> arr[i<b>+3</b>][j<b>+3</b>];
                <i>if</i> (prod <i>&gt;</i> max_prod) max_prod <i>=</i> prod;
            }
            <i>if</i> (i<b>+4</b> <i>&lt;</i> size) {
                <em>// check column</em></pre>
</div>
<div class="box" style="left:374px;top:804px;width:1288px;height:204px">
<pre id="con">The highest product is 60600672


<span>...Program finished with exit code 0
Press ENTER to exit console.</span></pre>
</div>
</body></html>
